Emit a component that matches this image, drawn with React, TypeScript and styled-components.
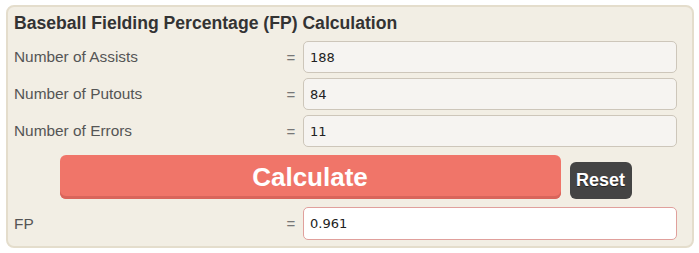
import React from "react";
import styled, { createGlobalStyle } from "styled-components";

const GlobalStyle = createGlobalStyle`
  body {
    margin: 0;
    background: #fff;
    font-family: "Liberation Sans", Arial, sans-serif;
  }
`;

const Page = styled.div`
  padding: 5px 5px 5px 6px;
`;

const Panel = styled.div`
  box-sizing: border-box;
  width: 688px;
  background: #f2eee4;
  border: 2px solid #e4ddcc;
  border-radius: 8px;
  padding: 5px 15px 6px 6px;
`;

const Title = styled.h3`
  margin: 0 0 7px;
  font-size: 17.6px;
  line-height: 22px;
  font-weight: bold;
  color: #333;
`;

const Rows = styled.div`
  display: flex;
  flex-direction: column;
  gap: 5px;
`;

const Row = styled.div`
  display: grid;
  grid-template-columns: 1fr 24px 374px;
  align-items: center;
`;

const Label = styled.label`
  font-size: 15.4px;
  color: #555;
`;

const Equals = styled.span`
  text-align: center;
  font-size: 15px;
  color: #777;
`;

const Input = styled.input<{ result?: boolean }>`
  box-sizing: border-box;
  width: 100%;
  height: ${(p) => (p.result ? "33px" : "32px")};
  padding: 0 6px;
  font-family: "DejaVu Sans", Verdana, sans-serif;
  font-size: 13px;
  color: #222;
  background: ${(p) => (p.result ? "#fff" : "#f6f4f1")};
  border: 1px solid ${(p) => (p.result ? "#e0a09c" : "#cdc6ba")};
  border-radius: 5px;
  outline: none;
`;

const Actions = styled.div`
  display: flex;
  justify-content: center;
  align-items: flex-end;
  gap: 9px;
  margin: 8px 0;
`;

const CalcButton = styled.button`
  width: 501px;
  height: 44px;
  border: none;
  border-radius: 6px;
  background: #f07569;
  box-shadow: inset 0 -3px 0 #d9655b;
  color: #fff;
  font-family: "Liberation Sans", Arial, sans-serif;
  font-size: 26px;
  font-weight: bold;
  cursor: pointer;
`;

const ResetButton = styled.button`
  width: 62px;
  height: 37px;
  border: none;
  border-radius: 6px;
  background: #444;
  color: #fff;
  font-family: "Liberation Sans", Arial, sans-serif;
  font-size: 18px;
  font-weight: bold;
  text-shadow: 0 1px 0 #222;
  cursor: pointer;
`;

const fields = [
  { label: "Number of Assists", value: "188" },
  { label: "Number of Putouts", value: "84" },
  { label: "Number of Errors", value: "11" },
];

export default function App() {
  return (
    <Page>
      <GlobalStyle />
      <Panel>
        <Title>Baseball Fielding Percentage (FP) Calculation</Title>
        <Rows>
          {fields.map((f) => (
            <Row key={f.label}>
              <Label>{f.label}</Label>
              <Equals>=</Equals>
              <Input type="text" defaultValue={f.value} />
            </Row>
          ))}
        </Rows>
        <Actions>
          <CalcButton>Calculate</CalcButton>
          <ResetButton>Reset</ResetButton>
        </Actions>
        <Row>
          <Label>FP</Label>
          <Equals>=</Equals>
          <Input type="text" result defaultValue="0.961" readOnly />
        </Row>
      </Panel>
    </Page>
  );
}
